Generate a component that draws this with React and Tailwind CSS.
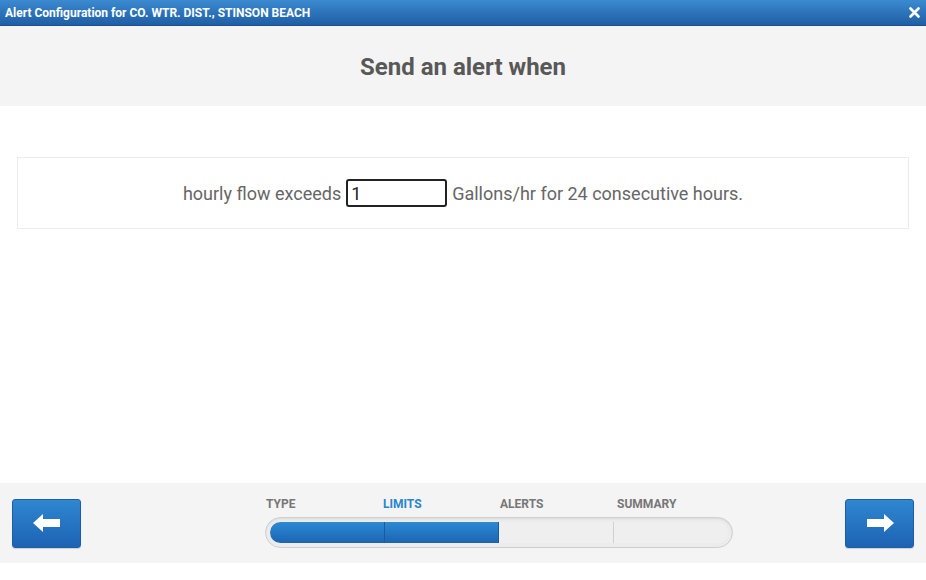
import React from 'react';

const steps = ['TYPE', 'LIMITS', 'ALERTS', 'SUMMARY'];
const current = 1;

const NavButton = ({ dir }) => (
  <button className="flex h-[49px] w-[69px] items-center justify-center rounded-[3px] border border-[#1c5fa8] bg-gradient-to-b from-[#2f86d1] to-[#1d63b3] shadow-[0_1px_1px_rgba(0,0,0,0.15)]">
    <svg width="28" height="18" viewBox="0 0 28 18">
      {dir === 'left' ? (
        <polygon points="0,9 10,0 10,5 27,5 27,13 10,13 10,18" fill="#fff" />
      ) : (
        <polygon points="28,9 18,0 18,5 1,5 1,13 18,13 18,18" fill="#fff" />
      )}
    </svg>
  </button>
);

export default function App() {
  return (
    <div className="flex h-[580px] w-[926px] flex-col bg-white font-['Roboto',sans-serif]">
      <div className="flex h-[26px] items-center justify-between border-b border-[#1a4f8c] bg-gradient-to-b from-[#3b8ad0] to-[#1f5ea5] pl-[5px] pr-[6px]">
        <span className="text-[12px] font-bold text-white">
          Alert Configuration for CO. WTR. DIST., STINSON BEACH
        </span>
        <svg width="11" height="11" viewBox="0 0 11 11">
          <path d="M1.5 1.5 L9.5 9.5 M9.5 1.5 L1.5 9.5" stroke="#fff" strokeWidth="2.6" strokeLinecap="round" />
        </svg>
      </div>

      <div className="flex h-[80px] items-center justify-center bg-[#f4f4f4] pt-[2px]">
        <h1 className="text-[24px] font-bold text-[#585858]">Send an alert when</h1>
      </div>

      <div className="flex-1 px-[17px] pt-[51px]">
        <div className="flex h-[72px] items-center justify-center border border-[#ececec] text-[18px] text-[#666]">
          <span>hourly flow exceeds</span>
          <input
            defaultValue="1"
            className="mx-[5px] h-[28px] w-[101px] rounded-[3px] border-2 border-[#222] bg-white px-[3px] text-[18px] text-[#222] outline-none"
          />
          <span>Gallons/hr for 24 consecutive hours.</span>
        </div>
      </div>

      <div className="mb-[17px] flex h-[80px] items-center bg-[#f4f4f4] px-[12px]">
        <NavButton dir="left" />
        <div className="ml-[184px] flex w-[468px] flex-col pb-[4px]">
          <div className="grid grid-cols-4 text-[12px] font-bold">
            {steps.map((s, i) => (
              <span
                key={s}
                className={i === current ? 'pl-[1px] text-[#2a85cf]' : 'pl-[1px] text-[#777]'}
              >
                {s}
              </span>
            ))}
          </div>
          <div className="mt-[4px] h-[31px] rounded-full border border-[#cfcfcf] bg-[#ececec] p-[4px] shadow-[inset_0_1px_2px_rgba(0,0,0,0.08)]">
            <div className="grid h-full grid-cols-4 overflow-hidden rounded-full">
              {steps.map((s, i) => (
                <div
                  key={s}
                  className={
                    i <= current
                      ? 'border-r border-[#1a5a9f] bg-gradient-to-b from-[#2d8ad3] to-[#1c64b2]'
                      : i === steps.length - 1
                      ? 'bg-[#efefef]'
                      : 'border-r border-[#d0d0d0] bg-[#efefef]'
                  }
                />
              ))}
            </div>
          </div>
        </div>
        <div className="ml-auto">
          <NavButton dir="right" />
        </div>
      </div>
    </div>
  );
}
